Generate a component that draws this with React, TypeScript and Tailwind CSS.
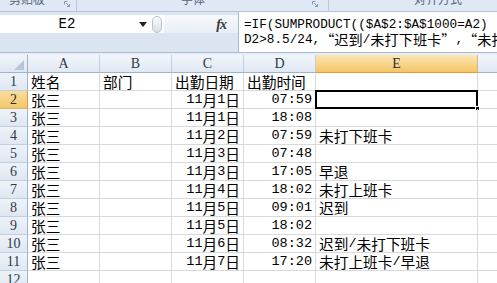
import React from "react"

// Sheet data: A 姓名, B 部门, C 出勤日期, D 出勤时间, E formula result
const rows: string[][] = [
  ["姓名", "部门", "出勤日期", "出勤时间", ""],
  ["张三", "", "11月1日", "07:59", ""],
  ["张三", "", "11月1日", "18:08", ""],
  ["张三", "", "11月2日", "07:59", "未打下班卡"],
  ["张三", "", "11月3日", "07:48", ""],
  ["张三", "", "11月3日", "17:05", "早退"],
  ["张三", "", "11月4日", "18:02", "未打上班卡"],
  ["张三", "", "11月5日", "09:01", "迟到"],
  ["张三", "", "11月5日", "18:02", ""],
  ["张三", "", "11月6日", "08:32", "迟到/未打下班卡"],
  ["张三", "", "11月7日", "17:20", "未打上班卡/早退"],
  ["", "", "", "", ""],
]

const cols = ["A", "B", "C", "D", "E"]

// split latin / CJK runs so each gets its own font
function Mixed({ text, small }: { text: string; small?: boolean }) {
  const parts = text.split(/([\x20-\x7e]+)/).filter(Boolean)
  return (
    <>
      {parts.map((p, i) =>
        /^[\x20-\x7e]+$/.test(p) ? (
          <span
            key={i}
            className={
              small
                ? "inline-block h-[15px] leading-[15px] align-top font-['Liberation_Mono',monospace] text-[12.7px]"
                : "inline-block h-[17px] leading-[17px] align-top font-['Liberation_Mono',monospace] text-[13.5px]"
            }
          >
            {p}
          </span>
        ) : (
          <span
            key={i}
            className={
              small
                ? "inline-block h-[15px] leading-[15px] align-top font-['Noto_Sans_CJK_SC',sans-serif] text-[14.2px]"
                : "inline-block h-[17px] leading-[17px] align-top font-['Noto_Sans_CJK_SC',sans-serif] text-[14.7px]"
            }
          >
            {p}
          </span>
        )
      )}
    </>
  )
}

function Launcher() {
  return (
    <svg width="6" height="6" viewBox="0 0 6 6" className="mt-[1px]">
      <path d="M0.5 0.5h3M0.5 0.5v3" stroke="#8a9ab0" strokeWidth="1" fill="none" />
      <path d="M2 2l3.5 3.5M5.5 3v2.5H3" stroke="#8a9ab0" strokeWidth="1" fill="none" />
    </svg>
  )
}

export default function App() {
  return (
    <div className="w-[497px] h-[283px] overflow-hidden bg-white font-['Noto_Sans_CJK_SC',sans-serif] text-black">
      {/* ribbon group labels (cut off) */}
      <div className="h-[12px] flex bg-[#dfe8f4] border-b border-[#b4c5da] overflow-hidden text-[12px] text-[#56667c]">
        <div className="w-[77px] flex items-start justify-between pl-[9px] pr-[6px] border-r border-[#b9c8da]">
          <span className="-mt-[9px] leading-[16px]">剪贴板</span>
          <Launcher />
        </div>
        <div className="w-[252px] flex items-start justify-between pl-[104px] pr-[10px] border-r border-[#b9c8da]">
          <span className="-mt-[9px] leading-[16px]">字体</span>
          <Launcher />
        </div>
        <div className="flex-1 flex items-start pl-[85px]">
          <span className="-mt-[9px] leading-[16px]">对齐方式</span>
        </div>
      </div>

      {/* name box + formula bar */}
      <div className="h-[41px] flex bg-[#dce6f2] border-b border-[#aabbd1]">
        <div className="w-[238px] flex flex-col">
          <div className="h-[3px]" />
          <div className="h-[18px] flex bg-white">
            <div className="w-[134px] flex items-center justify-center font-['Liberation_Mono',monospace] text-[14px]">
              E2
            </div>
            <div className="w-[18px] flex items-center justify-center">
              <svg width="8" height="5" viewBox="0 0 8 5">
                <path d="M0 0h8L4 5z" fill="#222" />
              </svg>
            </div>
            <div className="w-[12px] flex items-center">
              <div className="w-[10px] h-[17px] rounded-full border border-[#b8c3d1] bg-linear-to-b from-[#fbfcfd] to-[#d8dee6]" />
            </div>
            <div className="flex-1 flex items-center justify-end pr-[12px] bg-linear-to-b from-[#f6f9fc] to-[#e8eef6]">
              <span className="font-['Liberation_Serif',serif] italic font-bold text-[14px] text-[#3a3a3a] tracking-[-1px]">fx</span>
            </div>
          </div>
          <div className="flex-1 bg-[#dbe5f2]" />
        </div>
        <div className="flex-1 bg-white border-l border-[#a9b9ce] pl-[5px] pt-[5px] leading-[15px] whitespace-nowrap overflow-hidden">
          <div className="h-[15px]">
            <Mixed small text="=IF(SUMPRODUCT(($A$2:$A$1000=A2)" />
          </div>
          <div className="h-[15px]">
            <Mixed small text="D2>8.5/24,“迟到/未打下班卡”,“未打上班卡”" />
          </div>
        </div>
      </div>
      <div className="h-[2px] bg-[#e8eef7]" />

      {/* sheet grid */}
      <div className="grid grid-cols-[28px_72px_72px_72px_72px_162px_1fr]">
        {/* column headers */}
        <div className="h-[18px] flex items-end justify-end pr-[3px] pb-[2px] bg-linear-to-b from-[#f1f5fa] to-[#dfe7f2] border-r border-b border-[#9fb4cc]">
          <svg width="10" height="10" viewBox="0 0 10 10">
            <path d="M10 0V10H0z" fill="#b9c6d6" />
          </svg>
        </div>
        {cols.map((c) => (
          <div
            key={c}
            className={
              c === "E"
                ? "h-[18px] flex items-center justify-center font-['Liberation_Serif',serif] text-[14px] text-[#2f2f2f] bg-linear-to-b from-[#fbe6b5] to-[#f4c663] border-r border-[#d9b672] border-b border-b-[#e39a3a]"
                : "h-[18px] flex items-center justify-center font-['Liberation_Serif',serif] text-[14px] text-[#2f3a48] bg-linear-to-b from-[#f2f6fb] to-[#e0e8f3] border-r border-[#c3cfde] border-b border-b-[#9fb4cc]"
            }
          >
            {c}
          </div>
        ))}
        <div className="h-[18px] bg-linear-to-b from-[#f2f6fb] to-[#e0e8f3] border-b border-[#9fb4cc]" />

        {/* rows */}
        {rows.map((r, ri) => {
          const n = ri + 1
          return (
            <React.Fragment key={n}>
              <div
                className={
                  n === 2
                    ? "h-[18px] flex items-center justify-center font-['Liberation_Serif',serif] text-[14px] text-[#2f2f2f] bg-linear-to-b from-[#f9dc9c] to-[#f3c86c] border-r border-r-[#e39a3a] border-b border-b-[#d9b672]"
                    : "h-[18px] flex items-center justify-center font-['Liberation_Serif',serif] text-[14px] text-[#2f3a48] bg-linear-to-b from-[#eef3f9] to-[#dfe7f2] border-r border-r-[#9fb4cc] border-b border-b-[#c3cfde]"
                }
              >
                {n}
              </div>
              {r.map((v, ci) => {
                const right = n > 1 && (ci === 2 || ci === 3)
                const selected = n === 2 && ci === 4
                return (
                  <div
                    key={ci}
                    className={
                      right
                        ? "relative h-[18px] flex items-center justify-end pr-[3px] whitespace-nowrap border-r border-b border-[#d6d9de]"
                        : "relative h-[18px] flex items-center pl-[3px] whitespace-nowrap border-r border-b border-[#d6d9de]"
                    }
                  >
                    {v && (
                      <span className="h-[17px] leading-[17px]">
                        <Mixed text={v} />
                      </span>
                    )}
                    {selected && (
                      <>
                        <div className="absolute -left-[1px] -top-[1px] -right-[1px] -bottom-[1px] border-2 border-black" />
                        <div className="absolute -right-[3px] -bottom-[3px] w-[5px] h-[5px] bg-black border border-white" />
                      </>
                    )}
                  </div>
                )
              })}
              <div className="h-[18px] border-b border-[#d6d9de]" />
            </React.Fragment>
          )
        })}
      </div>
    </div>
  )
}
